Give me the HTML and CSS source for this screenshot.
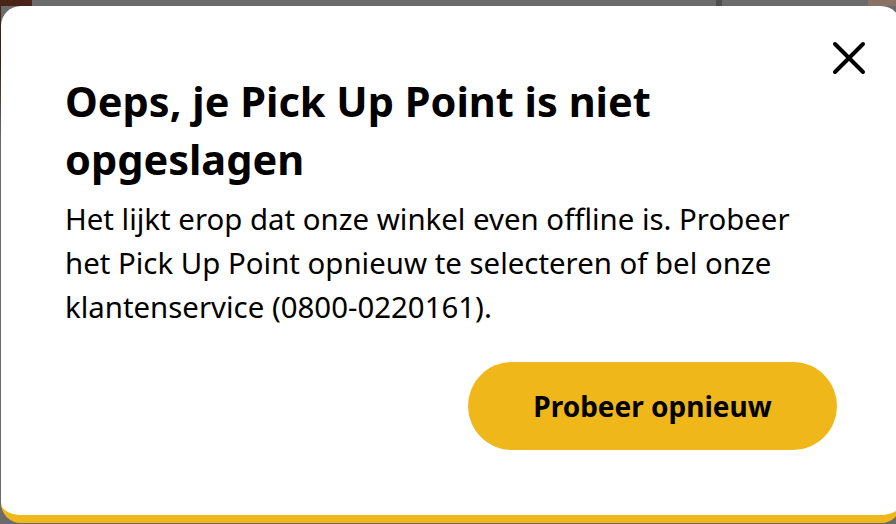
FILE: index.html
```html
<!DOCTYPE html>
<html lang="nl">
<head>
<meta charset="utf-8">
<title>Pick Up Point niet opgeslagen</title>
<link rel="stylesheet" href="styles.css">
</head>
<body>
<div class="backdrop">
  <section class="modal" role="dialog" aria-labelledby="modal-title">
    <button class="close" aria-label="Sluiten">
      <svg width="34" height="34" viewBox="0 0 34 34" aria-hidden="true">
        <path d="M3 3 L31 31 M31 3 L3 31" stroke="#000" stroke-width="4" stroke-linecap="round" fill="none"/>
      </svg>
    </button>
    <h1 id="modal-title" class="title">Oeps, je Pick Up Point is niet<br>opgeslagen</h1>
    <p class="text">Het lijkt erop dat onze winkel even offline is. Probeer<br>het Pick Up Point opnieuw te selecteren of bel onze<br>klantenservice (0800-0220161).</p>
    <div class="actions">
      <button class="retry">Probeer opnieuw</button>
    </div>
  </section>
</div>
</body>
</html>
```

FILE: styles.css
```css
* { box-sizing: border-box; }

html, body {
  margin: 0;
  padding: 0;
  height: 100%;
}

body {
  overflow: hidden;
  font-family: "Noto Sans", "Open Sans", sans-serif;
  color: #000;
}

.backdrop {
  width: 896px;
  height: 524px;
  padding-top: 6px;
  padding-left: 1px;
  background:
    linear-gradient(to bottom, #4a2418 0, #3a1d14 60px, #6b6b6b 140px) left top / 1px 100% no-repeat,
    linear-gradient(to right, #4a2418 0 32px, #6b6b6b 32px 716px, #4e4e4e 716px 722px, #6b6b6b 722px 868px, #8a7264 868px) left top / 100% 6px no-repeat,
    #6b6b6b;
}

.modal {
  position: relative;
  width: 900px;
  height: 517px;
  background: #fff;
  border-radius: 20px;
  border-bottom: 8px solid #efb71a;
  padding: 66px 64px 0 64px;
}

.close {
  position: absolute;
  top: 35px;
  right: 35px;
  width: 34px;
  height: 34px;
  padding: 0;
  border: 0;
  background: none;
  display: flex;
  align-items: center;
  justify-content: center;
}

.title {
  margin: 0;
  font-size: 41.5px;
  line-height: 58px;
  font-weight: 700;
  white-space: nowrap;
}

.text {
  margin: 9px 0 0;
  font-size: 29.4px;
  line-height: 44px;
  font-weight: 400;
  white-space: nowrap;
}

.actions {
  display: flex;
  justify-content: flex-end;
  margin-top: 33px;
}

.retry {
  width: 369px;
  height: 88px;
  border: 0;
  border-radius: 44px;
  background: #efb71a;
  color: #000;
  font-family: inherit;
  font-size: 28px;
  font-weight: 700;
  padding: 0;
}
```
